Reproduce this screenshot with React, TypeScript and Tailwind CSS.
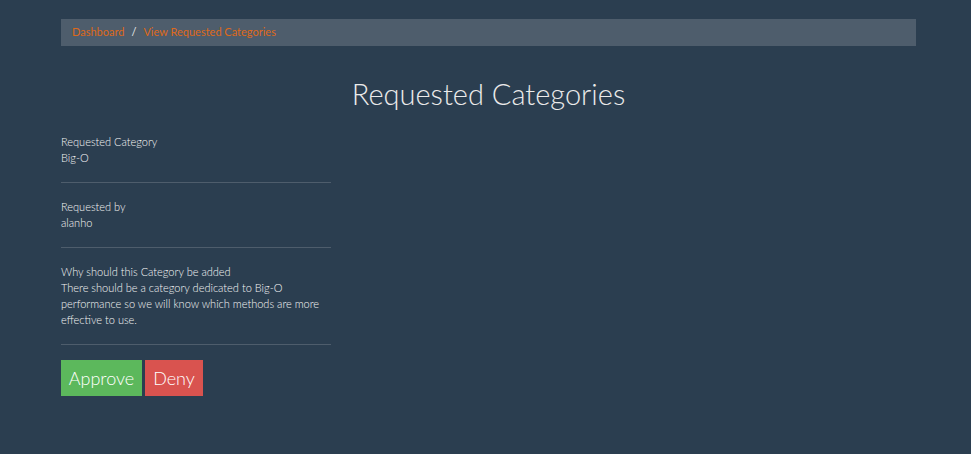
export default function App() {
  return (
    <div
      className="min-h-[454px] bg-[#2b3e50] text-[#ebebeb]"
      style={{ fontFamily: 'Lato, "Open Sans", sans-serif' }}
    >
      <div className="ml-[61px] w-[855px] pt-[19px]">
        <nav className="flex h-[27px] items-center bg-[#4e5d6c] px-[11px] text-[11px]">
          <a href="#" className="text-[#df691a]">
            Dashboard
          </a>
          <span className="px-[7px] text-[#ebebeb]">/</span>
          <a href="#" className="text-[#df691a]">
            View Requested Categories
          </a>
        </nav>

        <h1 className="mt-[30px] text-center text-[29px] font-light leading-[36px]">
          Requested Categories
        </h1>

        <div className="mt-[22px] w-[270px] text-[11px] font-light leading-[16px] text-[#f5f5f5]">
          <div>
            <div>Requested Category</div>
            <div>Big-O</div>
          </div>
          <hr className="my-[16px] border-t border-[#4e5d6c]" />
          <div>
            <div>Requested by</div>
            <div>alanho</div>
          </div>
          <hr className="my-[16px] border-t border-[#4e5d6c]" />
          <div>
            <div>Why should this Category be added</div>
            <div>
              There should be a category dedicated to Big-O performance so we will know which
              methods are more effective to use.
            </div>
          </div>
          <hr className="mb-[15px] mt-[16px] border-t border-[#4e5d6c]" />
          <div className="flex gap-[3px]">
            <button className="h-[36px] w-[81px] bg-[#5cb85c] text-[18px] font-light text-white">
              Approve
            </button>
            <button className="h-[36px] w-[58px] bg-[#d9534f] text-[18px] font-light text-white">
              Deny
            </button>
          </div>
        </div>
      </div>
    </div>
  );
}
